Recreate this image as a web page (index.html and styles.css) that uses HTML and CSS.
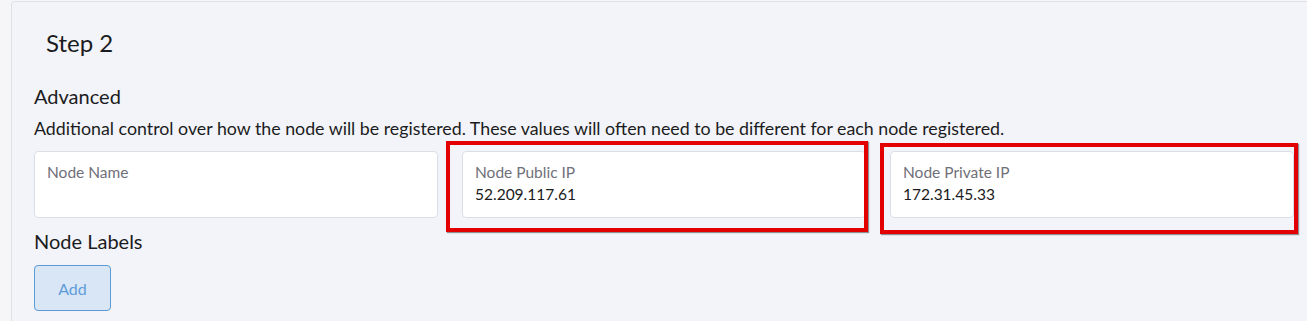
FILE: index.html
```html
<!DOCTYPE html>
<html lang="en">
<head>
    <meta charset="UTF-8">
    <title>Step 2 - Advanced</title>
    <link rel="stylesheet" href="styles.css">
</head>
<body>
    <div class="card">
        <h2 class="step-title">Step 2</h2>

        <h3 class="section-title">Advanced</h3>
        <p class="section-desc">Additional control over how the node will be registered. These values will often need to be different for each node registered.</p>

        <div class="field-row">
            <label class="field">
                <span class="field-label">Node Name</span>
                <input class="field-input" type="text" value="">
            </label>
            <label class="field">
                <span class="field-label">Node Public IP</span>
                <input class="field-input" type="text" value="52.209.117.61">
            </label>
            <label class="field">
                <span class="field-label">Node Private IP</span>
                <input class="field-input" type="text" value="172.31.45.33">
            </label>
        </div>

        <h3 class="section-title labels-title">Node Labels</h3>
        <button class="btn-add" type="button">Add</button>
    </div>

    <!-- annotation boxes drawn over the screenshot -->
    <div class="highlight hl-public"></div>
    <div class="highlight hl-private"></div>
</body>
</html>
```

FILE: styles.css
```css
* {
    box-sizing: border-box;
}
body {
    margin: 0;
    font-family: Lato, "Open Sans", sans-serif;
    background: #f6f6f9;
    color: #1b1c21;
    overflow: hidden;
    position: relative;
    height: 321px;
}
/* card keeps going past the right and bottom edge of the shot */
.card {
    margin: 1px 0 0 11px;
    padding: 0 0 0 22px;
    height: 320px;
    background: #f3f4f9;
    border-top: 1px solid #e0e1e7;
    border-left: 1px solid #e0e1e7;
    border-radius: 4px 0 0 0;
}
.step-title {
    margin: 0;
    padding: 27px 0 0 12px;
    font-size: 24px;
    font-weight: 400;
    line-height: 1.2;
}
.section-title {
    margin: 26px 0 0 0;
    font-size: 20px;
    font-weight: 400;
    line-height: 1.2;
}
.section-desc {
    margin: 10px 0 0 0;
    font-size: 17.8px;
    line-height: 1.2;
}
.field-row {
    display: grid;
    grid-template-columns: repeat(3, 404px);
    gap: 24px;
    margin-top: 12px;
}
.field {
    display: flex;
    flex-direction: column;
    height: 67px;
    padding: 11px 12px 0 12px;
    background: #fff;
    border: 1px solid #dcdee6;
    border-radius: 4px;
}
.field-label {
    font-size: 15.5px;
    line-height: 18px;
    color: #6f7079;
}
.field-input {
    margin-top: 4px;
    padding: 0;
    border: none;
    outline: none;
    font-family: inherit;
    font-size: 15.5px;
    line-height: 18px;
    color: #1b1c21;
    background: transparent;
}
.labels-title {
    margin-top: 11px;
}
.btn-add {
    margin-top: 12px;
    width: 77px;
    height: 46px;
    background: #d9e6f5;
    border: 1px solid #5b9bd6;
    border-radius: 4px;
    color: #5f9cdb;
    font-family: inherit;
    font-size: 16px;
    cursor: pointer;
}
.highlight {
    position: absolute;
    border: 4px solid #e20000;
    box-shadow: 1px 1px 1px rgba(60, 60, 60, 0.55);
}
.hl-public {
    left: 446px;
    top: 141px;
    width: 422px;
    height: 91px;
}
.hl-private {
    left: 880px;
    top: 143px;
    width: 418px;
    height: 91px;
}
```
